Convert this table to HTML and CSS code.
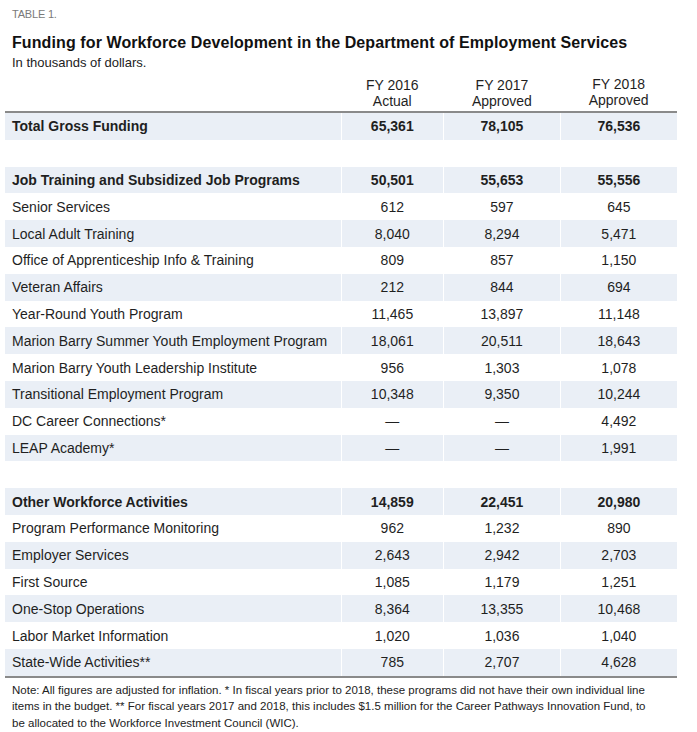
FILE: index.html
```html
<!DOCTYPE html>
<html>
<head>
<meta charset="utf-8">
<link rel="stylesheet" href="styles.css">
</head>
<body>
<div class="wrap">
  <div class="label">TABLE 1.</div>
  <h1 class="title">Funding for Workforce Development in the Department of Employment Services</h1>
  <div class="sub">In thousands of dollars.</div>
  <table class="data">
    <thead>
      <tr>
        <th class="name"></th>
        <th>FY 2016<br>Actual</th>
        <th>FY 2017<br>Approved</th>
        <th class="up">FY 2018<br>Approved</th>
      </tr>
    </thead>
    <tbody>
      <tr class="b alt"><td>Total Gross Funding</td><td>65,361</td><td>78,105</td><td>76,536</td></tr>
      <tr class="sp"><td colspan="4"></td></tr>
      <tr class="b alt"><td>Job Training and Subsidized Job Programs</td><td>50,501</td><td>55,653</td><td>55,556</td></tr>
      <tr><td>Senior Services</td><td>612</td><td>597</td><td>645</td></tr>
      <tr class="alt"><td>Local Adult Training</td><td>8,040</td><td>8,294</td><td>5,471</td></tr>
      <tr><td>Office of Apprenticeship Info &amp; Training</td><td>809</td><td>857</td><td>1,150</td></tr>
      <tr class="alt"><td>Veteran Affairs</td><td>212</td><td>844</td><td>694</td></tr>
      <tr><td>Year-Round Youth Program</td><td>11,465</td><td>13,897</td><td>11,148</td></tr>
      <tr class="alt"><td>Marion Barry Summer Youth Employment Program</td><td>18,061</td><td>20,511</td><td>18,643</td></tr>
      <tr><td>Marion Barry Youth Leadership Institute</td><td>956</td><td>1,303</td><td>1,078</td></tr>
      <tr class="alt"><td>Transitional Employment Program</td><td>10,348</td><td>9,350</td><td>10,244</td></tr>
      <tr><td>DC Career Connections*</td><td>—</td><td>—</td><td>4,492</td></tr>
      <tr class="alt"><td>LEAP Academy*</td><td>—</td><td>—</td><td>1,991</td></tr>
      <tr class="sp"><td colspan="4"></td></tr>
      <tr class="b alt"><td>Other Workforce Activities</td><td>14,859</td><td>22,451</td><td>20,980</td></tr>
      <tr><td>Program Performance Monitoring</td><td>962</td><td>1,232</td><td>890</td></tr>
      <tr class="alt"><td>Employer Services</td><td>2,643</td><td>2,942</td><td>2,703</td></tr>
      <tr><td>First Source</td><td>1,085</td><td>1,179</td><td>1,251</td></tr>
      <tr class="alt"><td>One-Stop Operations</td><td>8,364</td><td>13,355</td><td>10,468</td></tr>
      <tr><td>Labor Market Information</td><td>1,020</td><td>1,036</td><td>1,040</td></tr>
      <tr class="alt last"><td>State-Wide Activities**</td><td>785</td><td>2,707</td><td>4,628</td></tr>
    </tbody>
  </table>
  <p class="note">Note: All figures are adjusted for inflation. * In fiscal years prior to 2018, these programs did not have their own individual line items in the budget. ** For fiscal years 2017 and 2018, this includes $1.5 million for the Career Pathways Innovation Fund, to be allocated to the Workforce Investment Council (WIC).</p>
</div>
</body>
</html>
```

FILE: styles.css
```css
html, body {
  margin: 0;
  padding: 0;
  background: #fff;
}
body {
  font-family: "Liberation Sans", Arial, sans-serif;
  color: #1f1f1f;
}
.wrap {
  width: 672px;
  padding: 8px 0 0 5px;
}
.label {
  font-size: 11px;
  color: #7a7a7a;
  margin-left: 7px;
  line-height: 13px;
  letter-spacing: -0.2px;
}
.title {
  font-size: 16px;
  font-weight: bold;
  margin: 12px 0 0 7px;
  line-height: 19px;
  color: #111;
  letter-spacing: 0.1px;
}
.sub {
  font-size: 13px;
  margin: 3px 0 0 7px;
  line-height: 16px;
  color: #222;
}
.data {
  width: 672px;
  border-collapse: collapse;
  margin-top: 0;
  font-size: 14px;
}
.data th {
  font-weight: normal;
  font-size: 14px;
  line-height: 16px;
  vertical-align: bottom;
  text-align: center;
  padding: 0 0 2px 0;
  height: 37px;
  border-bottom: 2px solid #8a8a8a;
}
.data th.name { width: 336px; }
.data th.up { padding-bottom: 3px; }
.data td {
  height: 26.8px;
  padding: 0;
  text-align: center;
  border-left: 1px solid #fff;
}
.data td:first-child {
  text-align: left;
  padding-left: 7px;
  border-left: none;
}
.data tr.alt td { background: #eaeff6; }
.data tr.b td { font-weight: bold; }
.data tr.last td { border-bottom: 2px solid #8a8a8a; }
.note {
  width: 645px;
  font-size: 11.5px;
  line-height: 16.5px;
  margin: 4px 0 0 7px;
  color: #222;
}
```
